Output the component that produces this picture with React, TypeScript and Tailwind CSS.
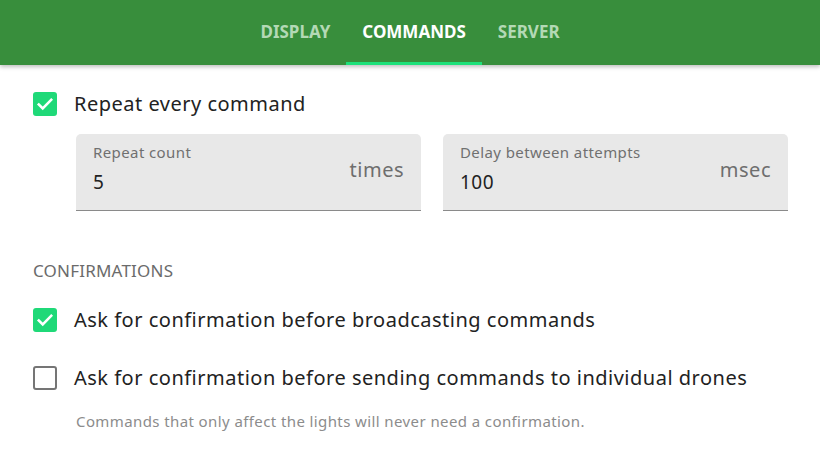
import type { JSX } from 'react';

const TABS = [
  { label: 'Display', active: false },
  { label: 'Commands', active: true },
  { label: 'Server', active: false },
];

const font = { fontFamily: '"Noto Sans", "Open Sans", sans-serif' };

function Checkbox({ checked }: { checked: boolean }): JSX.Element {
  if (checked) {
    return (
      <span className="w-[24px] h-[24px] rounded-[3px] bg-[#1fd978] flex items-center justify-center shrink-0">
        <svg width="20" height="20" viewBox="0 0 24 24" fill="none">
          <path d="M4.5 12.5l4.8 4.8L19.5 7" stroke="white" strokeWidth="3" strokeLinecap="square" />
        </svg>
      </span>
    );
  }
  return <span className="w-[24px] h-[24px] rounded-[3px] border-[2.5px] border-[#757575] shrink-0" />;
}

function Field({ label, value, unit }: { label: string; value: string; unit: string }): JSX.Element {
  return (
    <div className="flex-1 h-[77px] bg-[#e8e8e8] rounded-t-[5px] border-b border-[#8a8a8a] flex items-center pl-[17px] pr-[17px]">
      <div className="flex-1 flex flex-col mt-[-8px]">
        <span className="text-[15px] leading-[18px] tracking-[0.4px] text-[#707070]">{label}</span>
        <span className="text-[19px] leading-[24px] mt-[9px] tracking-[0.5px] text-[#222]">{value}</span>
      </div>
      <span className="text-[20px] tracking-[0.5px] text-[#6e6e6e] mb-[5px]">{unit}</span>
    </div>
  );
}

function Option({ checked, label }: { checked: boolean; label: string }): JSX.Element {
  return (
    <label className="flex items-center gap-[17px] pl-[33px]">
      <Checkbox checked={checked} />
      <span className="text-[20px] tracking-[0.5px] text-[#222]">{label}</span>
    </label>
  );
}

export default function App(): JSX.Element {
  return (
    <div className="w-[820px] h-[456px] bg-white overflow-hidden" style={font}>
      {/* Tab bar */}
      <nav className="h-[65px] bg-[#388e3c] flex justify-center shadow-[0_2px_4px_rgba(0,0,0,0.25)] relative z-10">
        {TABS.map(({ label, active }) => (
          <div
            key={label}
            className={`px-[16px] pt-[2px] flex items-center justify-center text-[17px] font-bold uppercase border-b-[3px] ${
              active ? 'text-white border-[#1de17a]' : 'text-[#b3d9b5] border-transparent'
            }`}
          >
            {label}
          </div>
        ))}
      </nav>

      <div className="pt-[24px]">
        <Option checked label="Repeat every command" />

        <div className="flex gap-[22px] pl-[76px] pr-[32px] mt-[15px]">
          <Field label="Repeat count" value="5" unit="times" />
          <Field label="Delay between attempts" value="100" unit="msec" />
        </div>

        <div className="pl-[33px] mt-[47px] text-[17px] tracking-[0.2px] uppercase text-[#6b6b6b]">Confirmations</div>

        <div className="mt-[21px]">
          <Option checked label="Ask for confirmation before broadcasting commands" />
        </div>
        <div className="mt-[28px]">
          <Option checked={false} label="Ask for confirmation before sending commands to individual drones" />
        </div>
        <p className="pl-[76px] mt-[17px] text-[15px] tracking-[0.4px] text-[#8c8c8c]">
          Commands that only affect the lights will never need a confirmation.
        </p>
      </div>
    </div>
  );
}
